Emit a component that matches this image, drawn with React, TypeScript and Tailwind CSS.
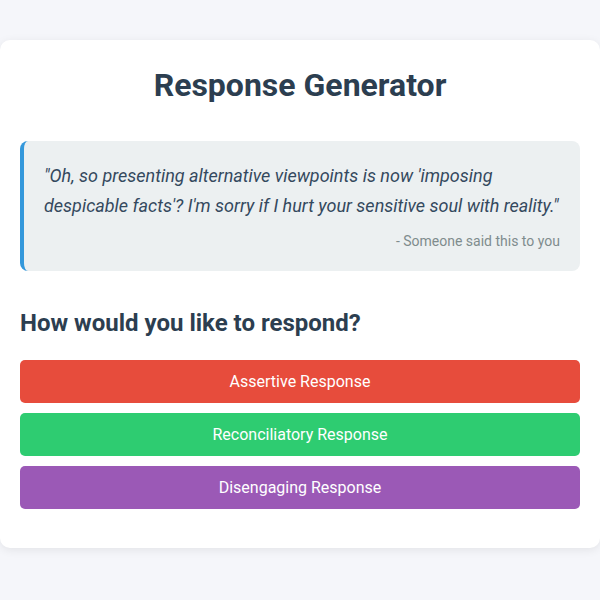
export default function App() {
  const buttons = [
    { label: "Assertive Response", cls: "bg-[#e74c3c]" },
    { label: "Reconciliatory Response", cls: "bg-[#2ecc71]" },
    { label: "Disengaging Response", cls: "bg-[#9b59b6]" },
  ];

  return (
    <div className="min-h-[600px] bg-[#f5f6fa] pt-10 font-['Roboto',sans-serif]">
      <div className="rounded-[10px] bg-white px-5 pb-[39px] pt-5 shadow-[0_2px_10px_rgba(0,0,0,0.08)]">
        <h1 className="mb-[36px] mt-[5px] text-center text-[32px] font-bold leading-[40px] text-[#2c3e50]">
          Response Generator
        </h1>
        <div className="rounded-lg border-l-4 border-[#3498db] bg-[#ecf0f1] p-5">
          <p className="text-[18px] italic leading-[30px] text-[#34495e]">
            "Oh, so presenting alternative viewpoints is now 'imposing despicable facts'? I'm sorry if I hurt your
            sensitive soul with reality."
          </p>
          <p className="mt-[10px] text-right text-[14px] leading-5 text-[#7f8c8d]">- Someone said this to you</p>
        </div>
        <h2 className="mb-[22px] mt-[37px] text-[24px] font-bold leading-[30px] text-[#2c3e50]">
          How would you like to respond?
        </h2>
        <div className="flex flex-col gap-[10px]">
          {buttons.map((b) => (
            <button
              key={b.label}
              type="button"
              className={`h-[43px] w-full rounded-[5px] text-[16px] text-white ${b.cls}`}
            >
              {b.label}
            </button>
          ))}
        </div>
      </div>
    </div>
  );
}
